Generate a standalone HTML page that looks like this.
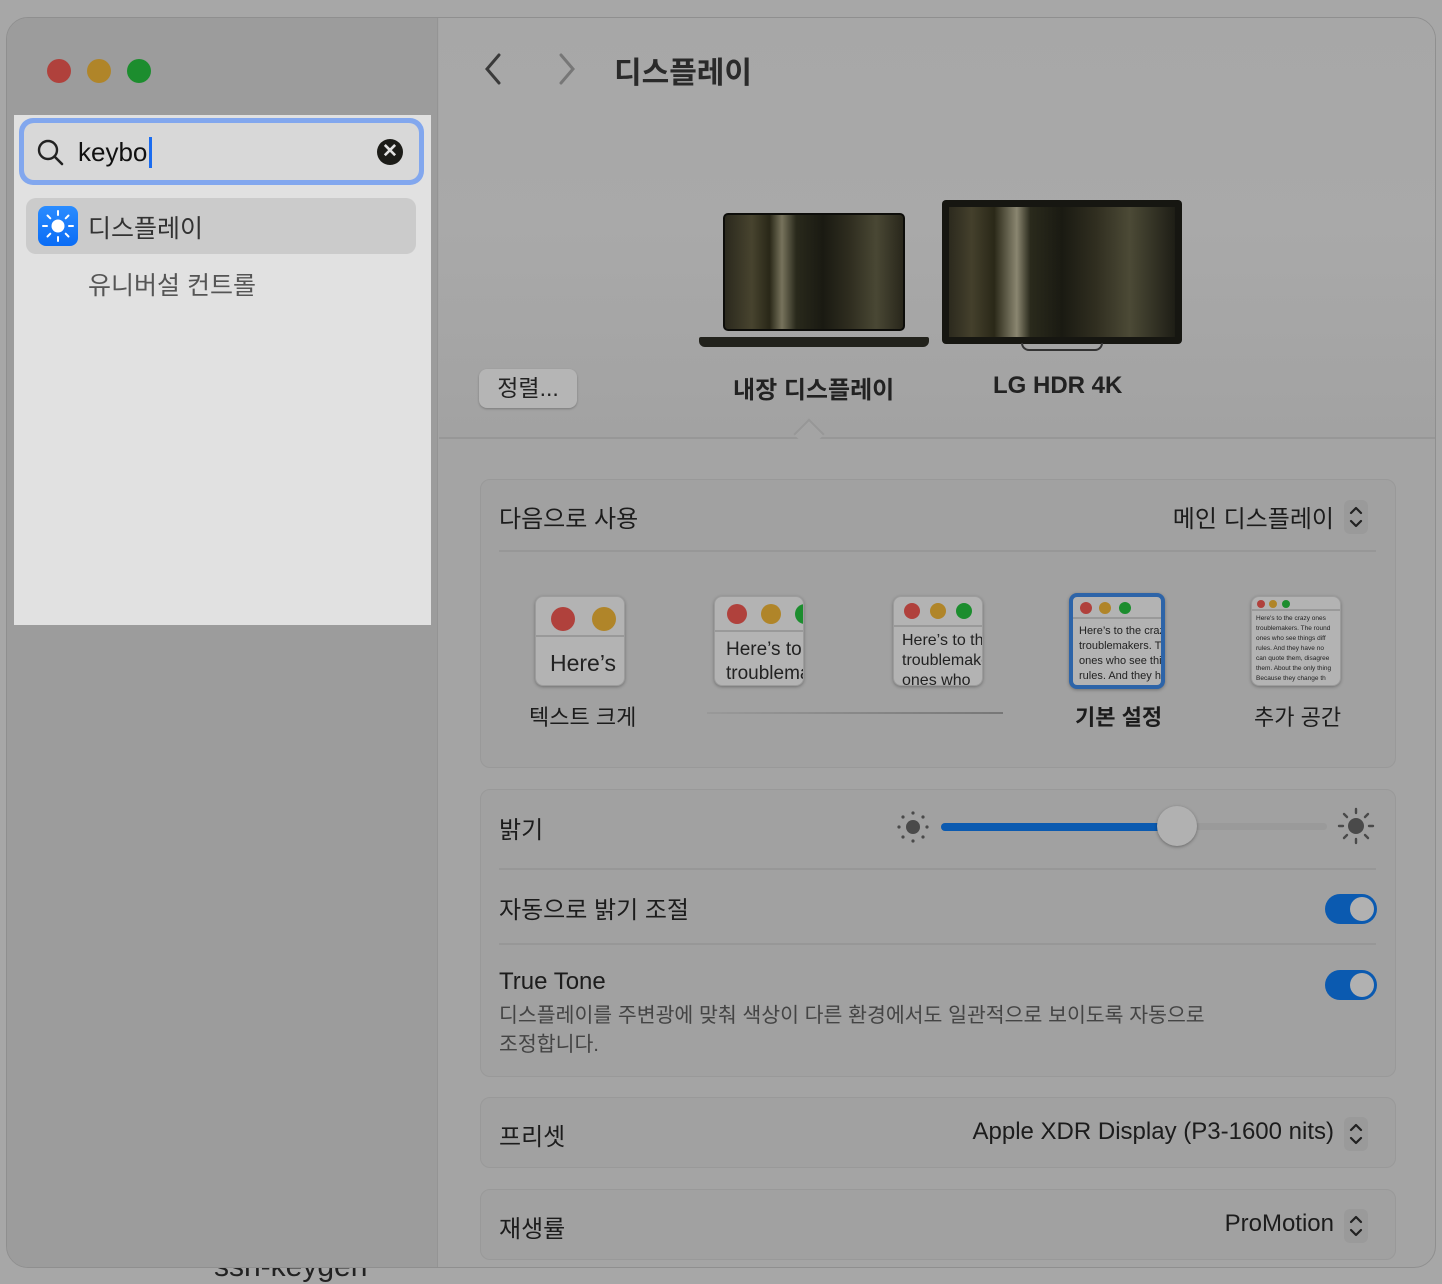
<!DOCTYPE html>
<html><head><meta charset="utf-8"><style>
*{margin:0;padding:0;box-sizing:border-box}
body{width:1442px;height:1276px;background:#a7a7a7;position:relative;overflow:hidden;font-family:"Liberation Sans","Noto Sans CJK KR",sans-serif;color:#1c1c1c}
.a{position:absolute}
.win{left:6px;top:17px;width:1430px;height:1251px;border-radius:22px;background:#a4a4a4;border:1px solid #8f8f8f;overflow:hidden}
.side{left:0;top:0;width:431px;height:1251px;background:#9c9c9c;border-right:1px solid #949494}
.dot{width:24px;height:24px;border-radius:50%;top:41px}
.card{left:473px;width:916px;background:#a1a1a1;border:1px solid #999;border-radius:10px}
.t{font-size:24px;white-space:nowrap}
.r{text-align:right;width:600px}
.hr{height:2px;background:#979797}
.tog{width:52px;height:30px;border-radius:15px;background:#0b5ab0}
.tog::after{content:"";position:absolute;right:3px;top:3px;width:24px;height:24px;border-radius:50%;background:#b1b1b1}
.step{width:24px;height:34px;border-radius:6px;background:#9a9a9a}
.pv{background:#b3b3b3;border-radius:8px;overflow:hidden;box-shadow:0 1px 3px rgba(0,0,0,.3);border:1px solid #9c9c9c}
.pv .bar{border-bottom:2px solid #999;position:relative}
.c{border-radius:50%;position:absolute}
.pv .tx{color:#222;white-space:nowrap;overflow:hidden}
</style></head><body>
<div class="a t" style="left:214px;top:1250px;font-size:30px;color:#222">ssh-keygen</div>
<div class="a win">
 <div class="a side"></div>
 <div class="a dot" style="left:40px;background:#b0413c"></div>
 <div class="a dot" style="left:80px;background:#b08529"></div>
 <div class="a dot" style="left:120px;background:#1c8d2e"></div>
 <div class="a" style="left:432px;top:0;width:998px;height:420px;background:linear-gradient(#a7a7a7,#a9a9a9 50%,#a2a2a2)"></div>
 <div class="a" style="left:432px;top:419px;width:998px;height:2px;background:#979797"></div>
 <div class="a" style="left:791px;top:405px;width:22px;height:22px;background:#a4a4a4;border-left:2px solid #979797;border-top:2px solid #979797;transform:rotate(45deg)"></div>
 <svg class="a" style="left:474px;top:34px" width="100" height="34"><path d="M18 3 L6 17 L18 31" stroke="#3a3a3a" stroke-width="3" fill="none" stroke-linecap="round"/><path d="M80 3 L92 17 L80 31" stroke="#777" stroke-width="3" fill="none" stroke-linecap="round"/></svg>
 <div class="a t" style="left:607px;top:30px;font-size:30px;font-weight:bold;color:#2a2a2a">디스플레이</div>
 <div class="a" style="left:716px;top:195px;width:182px;height:118px;background:#171712;border-radius:5px;border:2px solid #0d0d0a;overflow:hidden">
  <div style="width:100%;height:100%;background:linear-gradient(90deg,#2c2a1e,#4a4630 15%,#2a2818 25%,#7c7860 32%,#2a2a1c 40%,#1a1a12 55%,#302e20 70%,#4c4a36 85%,#2a281c);opacity:.95"></div>
 </div>
 <div class="a" style="left:692px;top:319px;width:230px;height:10px;background:#22221c;border-radius:2px 2px 6px 6px"></div>
 <div class="a" style="left:935px;top:182px;width:240px;height:144px;background:#161611;border-radius:4px;padding:7px">
  <div style="width:100%;height:100%;background:linear-gradient(90deg,#2c2a1e,#44402c 10%,#2a2818 20%,#8a8670 30%,#2a2a1c 36%,#1a1a12 50%,#302e20 65%,#4c4a36 80%,#1e1e16);"></div>
 </div>
 <div class="a" style="left:1014px;top:325px;width:82px;height:8px;border:2px solid #333;border-top:none;border-radius:0 0 40px 40px"></div>
 <div class="a" style="left:472px;top:351px;width:98px;height:39px;background:#b5b5b5;border-radius:8px;box-shadow:0 1px 2px rgba(0,0,0,.25);text-align:center;font-size:23px;line-height:39px;color:#222">정렬...</div>
 <div class="a t" style="left:726px;top:352px;font-weight:bold;color:#222">내장 디스플레이</div>
 <div class="a t" style="left:986px;top:354px;font-weight:bold;color:#222">LG HDR 4K</div>

 <div class="a card" style="top:461px;height:289px"></div>
 <div class="a t" style="left:492px;top:481px">다음으로 사용</div>
 <div class="a t r" style="left:727px;top:481px">메인 디스플레이</div>
 <svg class="a step" style="left:1337px;top:482px" width="24" height="34"><path d="M7 13l5-5 5 5M7 21l5 5 5-5" stroke="#222" stroke-width="2.2" fill="none" stroke-linecap="round" stroke-linejoin="round"/></svg>
 <div class="a hr" style="left:492px;top:532px;width:877px"></div>
 <div class="a pv" style="left:528px;top:578px;width:90px;height:90px"><div class="bar" style="height:40px"><div class="c" style="left:15px;top:10px;width:24px;height:24px;background:#b0413c"></div><div class="c" style="left:56px;top:10px;width:24px;height:24px;background:#b08529"></div></div><div class="tx" style="font-size:23px;padding:13px 0 0 14px">Here’s</div></div>
 <div class="a pv" style="left:707px;top:578px;width:90px;height:90px"><div class="bar" style="height:35px"><div class="c" style="left:12px;top:7px;width:20px;height:20px;background:#b0413c"></div><div class="c" style="left:46px;top:7px;width:20px;height:20px;background:#b08529"></div><div class="c" style="left:80px;top:7px;width:20px;height:20px;background:#1c8d2e"></div></div><div class="tx" style="font-size:19px;line-height:24px;padding:6px 0 0 11px">Here’s to the<br>troublemakers</div></div>
 <div class="a pv" style="left:886px;top:578px;width:90px;height:90px"><div class="bar" style="height:30px"><div class="c" style="left:10px;top:6px;width:16px;height:16px;background:#b0413c"></div><div class="c" style="left:36px;top:6px;width:16px;height:16px;background:#b08529"></div><div class="c" style="left:62px;top:6px;width:16px;height:16px;background:#1c8d2e"></div></div><div class="tx" style="font-size:16px;line-height:20px;padding:4px 0 0 8px">Here’s to the<br>troublemakers<br>ones who</div></div>
 <div class="a pv" style="left:1062px;top:575px;width:96px;height:96px;border:4px solid #2d64a8"><div class="bar" style="height:22px"><div class="c" style="left:7px;top:5px;width:12px;height:12px;background:#b0413c"></div><div class="c" style="left:26px;top:5px;width:12px;height:12px;background:#b08529"></div><div class="c" style="left:46px;top:5px;width:12px;height:12px;background:#1c8d2e"></div></div><div class="tx" style="font-size:11px;line-height:15px;padding:5px 0 0 6px">Here’s to the crazy<br>troublemakers. The<br>ones who see things<br>rules. And they have</div></div>
 <div class="a pv" style="left:1244px;top:578px;width:90px;height:90px"><div class="bar" style="height:14px"><div class="c" style="left:5px;top:3px;width:8px;height:8px;background:#b0413c"></div><div class="c" style="left:17px;top:3px;width:8px;height:8px;background:#b08529"></div><div class="c" style="left:30px;top:3px;width:8px;height:8px;background:#1c8d2e"></div></div><div class="tx" style="font-size:6.5px;line-height:10px;padding:3px 0 0 4px">Here's to the crazy ones<br>troublemakers. The round<br>ones who see things diff<br>rules. And they have no<br>can quote them, disagree<br>them. About the only thing<br>Because they change th</div></div>
 <div class="a" style="left:700px;top:694px;width:296px;height:2px;background:linear-gradient(90deg,#999,#777)"></div>
 <div class="a t" style="left:522px;top:682px;font-size:22px">텍스트 크게</div>
 <div class="a t" style="left:1068px;top:682px;font-size:22px;font-weight:bold">기본 설정</div>
 <div class="a t" style="left:1247px;top:682px;font-size:22px">추가 공간</div>

 <div class="a card" style="top:771px;height:288px"></div>
 <div class="a t" style="left:492px;top:792px">밝기</div>
 <svg class="a" style="left:888px;top:791px" width="36" height="36"><circle cx="18" cy="18" r="7" fill="#4a4a4a"/><g fill="#4a4a4a"><circle cx="18" cy="4" r="1.6"/><circle cx="18" cy="32" r="1.6"/><circle cx="4" cy="18" r="1.6"/><circle cx="32" cy="18" r="1.6"/><circle cx="8" cy="8" r="1.6"/><circle cx="28" cy="8" r="1.6"/><circle cx="8" cy="28" r="1.6"/><circle cx="28" cy="28" r="1.6"/></g></svg>
 <div class="a" style="left:934px;top:805px;width:386px;height:7px;border-radius:4px;background:#9a9a9a"></div>
 <div class="a" style="left:934px;top:805px;width:236px;height:8px;border-radius:4px;background:#0b5ab0"></div>
 <div class="a" style="left:1150px;top:788px;width:40px;height:40px;border-radius:50%;background:#b1b1b1;box-shadow:0 1px 3px rgba(0,0,0,.35)"></div>
 <svg class="a" style="left:1330px;top:789px" width="40" height="40"><circle cx="19" cy="19" r="8" fill="#4a4a4a"/><g stroke="#4a4a4a" stroke-width="2.4" stroke-linecap="round"><path d="M19 2v4M19 32v4M2 19h4M32 19h4M7 7l3 3M28 28l3 3M31 7l-3 3M7 31l3-3"/></g></svg>
 <div class="a hr" style="left:492px;top:850px;width:877px"></div>
 <div class="a t" style="left:492px;top:872px">자동으로 밝기 조절</div>
 <div class="a tog" style="left:1318px;top:876px"></div>
 <div class="a hr" style="left:492px;top:925px;width:877px"></div>
 <div class="a t" style="left:492px;top:950px">True Tone</div>
 <div class="a tog" style="left:1318px;top:952px"></div>
 <div class="a" style="left:492px;top:983px;font-size:20.5px;line-height:29px;color:#444">디스플레이를 주변광에 맞춰 색상이 다른 환경에서도 일관적으로 보이도록 자동으로<br>조정합니다.</div>

 <div class="a card" style="top:1079px;height:71px"></div>
 <div class="a t" style="left:492px;top:1099px">프리셋</div>
 <div class="a t r" style="left:727px;top:1100px">Apple XDR Display (P3-1600 nits)</div>
 <svg class="a step" style="left:1337px;top:1099px" width="24" height="34"><path d="M7 13l5-5 5 5M7 21l5 5 5-5" stroke="#222" stroke-width="2.2" fill="none" stroke-linecap="round" stroke-linejoin="round"/></svg>
 <div class="a card" style="top:1171px;height:71px"></div>
 <div class="a t" style="left:492px;top:1191px">재생률</div>
 <div class="a t r" style="left:727px;top:1192px">ProMotion</div>
 <svg class="a step" style="left:1337px;top:1191px" width="24" height="34"><path d="M7 13l5-5 5 5M7 21l5 5 5-5" stroke="#222" stroke-width="2.2" fill="none" stroke-linecap="round" stroke-linejoin="round"/></svg>
</div>

<div class="a" style="left:14px;top:115px;width:417px;height:510px;background:#e1e1e1"></div>
<div class="a" style="left:19px;top:118px;width:405px;height:67px;border-radius:14px;background:#82a7ee"></div>
<div class="a" style="left:24px;top:123px;width:395px;height:57px;border-radius:10px;background:#d8d8d8"></div>
<svg class="a" style="left:36px;top:138px" width="30" height="30"><circle cx="12" cy="12" r="9" stroke="#222" stroke-width="2.4" fill="none"/><path d="M18.5 18.5L26 26" stroke="#222" stroke-width="2.6" stroke-linecap="round"/></svg>
<div class="a t" style="left:78px;top:137px;font-size:26px;color:#111">keybo</div>
<div class="a" style="left:149px;top:137px;width:3px;height:31px;background:#1a6cf0"></div>
<div class="a" style="left:377px;top:139px;width:26px;height:26px;border-radius:50%;background:#1c1c18;color:#e1e1e1;font-size:19px;line-height:26px;text-align:center;font-weight:bold">✕</div>
<div class="a" style="left:26px;top:198px;width:390px;height:56px;border-radius:10px;background:#cbcbcb"></div>
<div class="a" style="left:38px;top:206px;width:40px;height:40px;border-radius:8px;background:linear-gradient(#2a8cff,#0a6cf5)"></div>
<svg class="a" style="left:38px;top:206px" width="40" height="40"><circle cx="20" cy="20" r="6.5" fill="#fff"/><g stroke="#fff" stroke-width="2" stroke-linecap="round"><path d="M20 5v4M20 31v4M5 20h4M31 20h4M9.5 9.5l2.8 2.8M27.7 27.7l2.8 2.8M30.5 9.5l-2.8 2.8M9.5 30.5l2.8-2.8"/></g></svg>
<div class="a t" style="left:88px;top:209px;font-size:25px;color:#333">디스플레이</div>
<div class="a t" style="left:88px;top:266px;font-size:25px;color:#555">유니버설 컨트롤</div>
</body></html>
